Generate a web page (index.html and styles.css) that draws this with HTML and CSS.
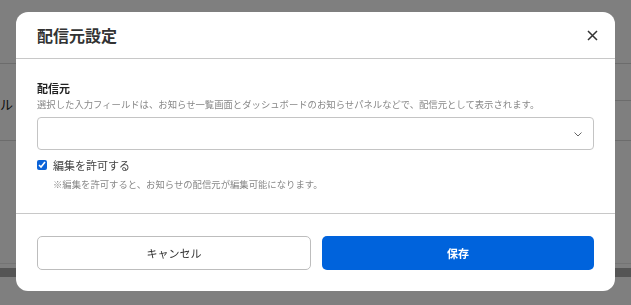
FILE: index.html
```html
<!DOCTYPE html>
<html lang="ja">
<head>
  <meta charset="UTF-8" />
  <meta name="viewport" content="width=device-width, initial-scale=1.0">
  <title>配信元設定</title>
  <link rel="stylesheet" href="styles.css">
</head>
<body>
  <div class="page">
    <div class="row-head"></div>
    <div class="row-body">
      <div class="cell-left">ル</div>
      <div class="cell-right">
        <div class="sub-row"></div>
        <div class="sub-row"></div>
      </div>
    </div>
    <div class="row-rest"></div>
    <div class="scrollbar"></div>
  </div>

  <div class="overlay">
    <div class="modal">
      <div class="modal-header">
        <h2>配信元設定</h2>
        <button class="close" aria-label="閉じる">
          <svg width="11" height="11" viewBox="0 0 11 11">
            <path d="M1 1 L10 10 M10 1 L1 10" stroke="#333" stroke-width="1.5" fill="none" />
          </svg>
        </button>
      </div>

      <div class="modal-body">
        <label class="field-label">配信元</label>
        <p class="field-desc">選択した入力フィールドは、お知らせ一覧画面とダッシュボードのお知らせパネルなどで、配信元として表示されます。</p>
        <div class="select">
          <svg width="8" height="5" viewBox="0 0 8 5">
            <path d="M0.5 0.5 L4 4 L7.5 0.5" stroke="#666" stroke-width="1" fill="none" />
          </svg>
        </div>
        <label class="check-row">
          <input type="checkbox" checked />
          <span>編集を許可する</span>
        </label>
        <p class="note">※編集を許可すると、お知らせの配信元が編集可能になります。</p>
      </div>

      <div class="modal-footer">
        <button class="btn btn-cancel">キャンセル</button>
        <button class="btn btn-save">保存</button>
      </div>
    </div>
  </div>
</body>
</html>
```

FILE: styles.css
```css
* {
  box-sizing: border-box;
}
body {
  margin: 0;
  font-family: "Noto Sans CJK JP", "Noto Sans", sans-serif;
  background: #fff;
  overflow: hidden;
  height: 305px;
}

/* page behind the dialog */
.page {
  width: 100%;
}
.row-head {
  height: 64px;
  border-bottom: 1px solid #d8d8d8;
}
.row-body {
  display: flex;
  height: 77px;
  border-bottom: 1px solid #d8d8d8;
}
.cell-left {
  width: 300px;
  display: flex;
  align-items: center;
  padding-top: 2px;
  font-size: 13px;
  color: #222;
}
.cell-right {
  flex: 1;
  display: flex;
  flex-direction: column;
}
.sub-row {
  height: 37px;
  border-bottom: 1px solid #d8d8d8;
}
.sub-row:last-child {
  border-bottom: none;
}
.row-rest {
  height: 123px;
  border-bottom: 1px solid #e8e8e8;
}
.scrollbar {
  margin-top: 4px;
  height: 9px;
  background: #ababab;
}

/* dialog */
.overlay {
  position: fixed;
  inset: 0;
  background: rgba(0, 0, 0, 0.5);
  display: flex;
  align-items: flex-start;
  justify-content: center;
  padding-top: 12px;
}
.modal {
  width: 599px;
  height: 279px;
  background: #fff;
  border-radius: 12px;
  display: flex;
  flex-direction: column;
}
.modal-header {
  height: 47px;
  padding: 0 17px 0 21px;
  display: flex;
  align-items: center;
  justify-content: space-between;
  border-bottom: 1px solid #c8c8c8;
}
.modal-header h2 {
  margin: 0;
  font-size: 16px;
  font-weight: bold;
  color: #333;
}
.close {
  border: none;
  background: none;
  padding: 0;
  width: 11px;
  height: 11px;
  display: flex;
  cursor: pointer;
}
.modal-body {
  height: 155px;
  padding: 21px 21px 0;
  border-bottom: 1px solid #c8c8c8;
}
.field-label {
  display: block;
  font-size: 11px;
  line-height: 16px;
  font-weight: bold;
  color: #222;
}
.field-desc {
  margin: 1px 0 0;
  font-size: 9.35px;
  line-height: 14px;
  color: #888;
  white-space: nowrap;
}
.select {
  margin-top: 6px;
  height: 33px;
  border: 1px solid #c4c4c4;
  border-radius: 4px;
  display: flex;
  align-items: center;
  justify-content: flex-end;
  padding-right: 11px;
}
.select svg {
  margin-top: 2px;
}
.check-row {
  margin-top: 7px;
  display: flex;
  align-items: center;
  gap: 6px;
  font-size: 11px;
  line-height: 16px;
  color: #444;
}
.check-row input {
  margin: 0;
  width: 10px;
  height: 10px;
  accent-color: #0b63d8;
}
.note {
  margin: 4px 0 0;
  padding-left: 16px;
  font-size: 9.35px;
  line-height: 14px;
  color: #888;
  white-space: nowrap;
}
.modal-footer {
  flex: 1;
  display: flex;
  gap: 11px;
  padding: 22px 21px 21px;
}
.btn {
  flex: 1;
  height: 34px;
  border-radius: 5px;
  font-family: inherit;
  font-size: 11px;
  cursor: pointer;
}
.btn-cancel {
  background: #fff;
  border: 1px solid #bdbdbd;
  color: #333;
}
.btn-save {
  background: #0063dc;
  border: none;
  color: #fff;
  font-weight: bold;
}
```
